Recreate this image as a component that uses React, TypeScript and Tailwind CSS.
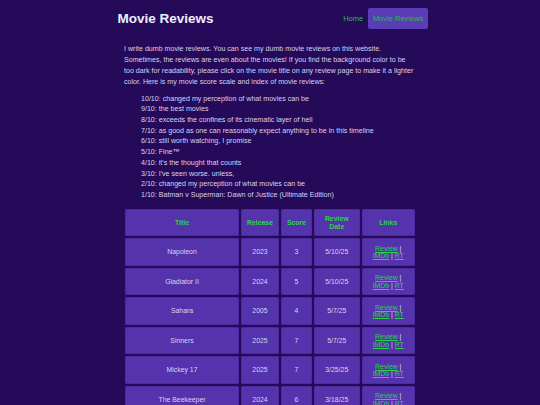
import React from "react";

const scale = [
  "10/10: changed my perception of what movies can be",
  "9/10: the best movies",
  "8/10: exceeds the confines of its cinematic layer of hell",
  "7/10: as good as one can reasonably expect anything to be in this timeline",
  "6/10: still worth watching, I promise",
  "5/10: Fine™",
  "4/10: it's the thought that counts",
  "3/10: I've seen worse. unless,",
  "2/10: changed my perception of what movies can be",
  "1/10: Batman v Superman: Dawn of Justice (Ultimate Edition)",
];

const rows = [
  ["Napoleon", "2023", "3", "5/10/25"],
  ["Gladiator II", "2024", "5", "5/10/25"],
  ["Sahara", "2005", "4", "5/7/25"],
  ["Sinners", "2025", "7", "5/7/25"],
  ["Mickey 17", "2025", "7", "3/25/25"],
  ["The Beekeeper", "2024", "6", "3/18/25"],
];

const cell = "bg-[#5533ad] rounded-[2px] shadow-[inset_0_0_0_1px_#4b2b9e] p-0";

export default function App() {
  return (
    <div
      className="h-[405px] overflow-hidden bg-[#240a58] text-[#d9d2f0]"
      style={{ fontFamily: '"Liberation Sans", Arial, sans-serif' }}
    >
      <div className="w-[320px] mx-auto">
        <header className="h-[37px] flex items-center justify-between pl-[7.5px] pr-[2px]">
          <h1 className="text-[13.5px] font-bold text-[#f0ecfa] leading-[16px]">Movie Reviews</h1>
          <nav className="flex items-center gap-[5px] text-[7.5px] leading-[9px]">
            <a className="text-[#2fb84c]">Home</a>
            <a className="text-[#2fb84c] bg-[#5a3cb4] rounded-[2px] px-[4.7px] py-[6px]">Movie Reviews</a>
          </nav>
        </header>
        <main className="px-[14px] pt-[6.8px] text-[7.1px]">
          <p className="leading-[11px] whitespace-nowrap">
            I write dumb movie reviews. You can see my dumb movie reviews on this website.
            <br />
            Sometimes, the reviews are even about the movies! If you find the background color to be
            <br />
            too dark for readability, please click on the movie title on any review page to make it a lighter
            <br />
            color. Here is my movie score scale and index of movie reviews:
          </p>
          <ul className="pl-[17px] pt-[5.85px] leading-[10.7px]">
            {scale.map((s) => (
              <li key={s}>{s}</li>
            ))}
          </ul>
          <table className="mt-[6px] ml-[-1px] border-separate border-spacing-[2px] text-[6.9px] leading-[7.4px]">
            <thead>
              <tr className="text-[#2fd04e] font-bold">
                <th className={cell + " h-[27.7px] w-[114px] min-w-[114px]"}>Title</th>
                <th className={cell + " w-[38px] min-w-[38px]"}>Release</th>
                <th className={cell + " w-[31px] min-w-[31px]"}>Score</th>
                <th className={cell + " w-[45.5px] min-w-[45.5px]"}>
                  Review
                  <br />
                  Date
                </th>
                <th className={cell + " w-[53.5px] min-w-[53.5px]"}>Links</th>
              </tr>
            </thead>
            <tbody>
              {rows.map((r) => (
                <tr key={r[0]} className="text-center">
                  <td className={cell + " h-[27.5px]"}>{r[0]}</td>
                  <td className={cell}>{r[1]}</td>
                  <td className={cell}>{r[2]}</td>
                  <td className={cell}>{r[3]}</td>
                  <td className={cell}>
                    <a className="text-[#2fd04e] underline">Review</a> |
                    <br />
                    <a className="text-[#2fd04e] underline">IMDb</a> | <a className="text-[#2fd04e] underline">RT</a>
                  </td>
                </tr>
              ))}
            </tbody>
          </table>
        </main>
      </div>
    </div>
  );
}
